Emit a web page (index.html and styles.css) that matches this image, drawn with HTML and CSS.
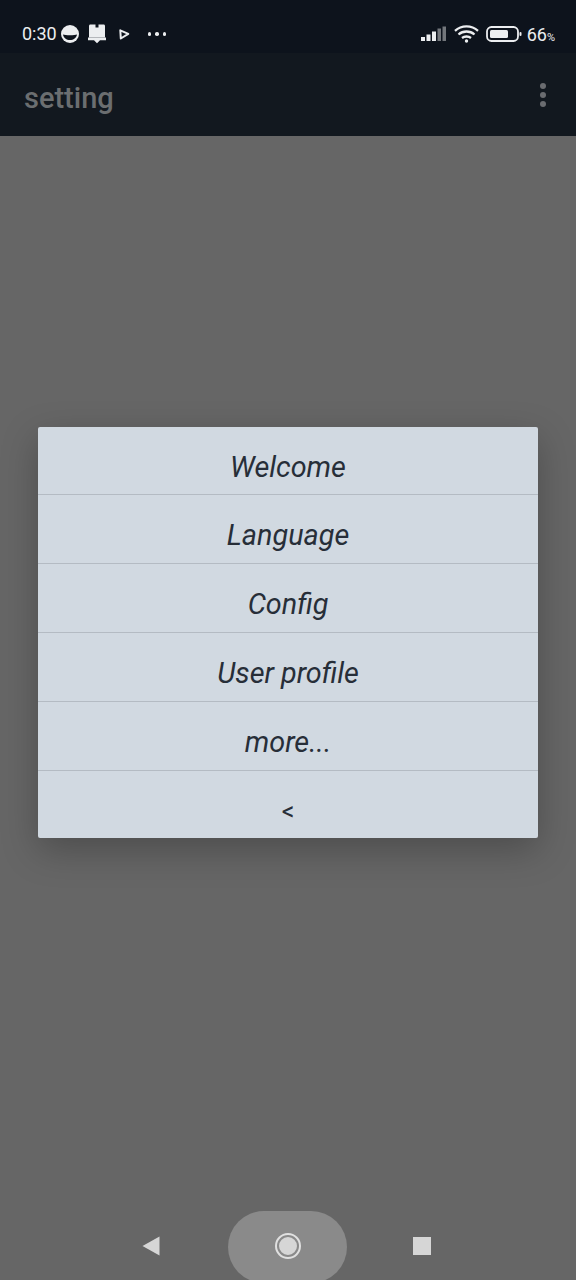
FILE: index.html
```html
<!DOCTYPE html>
<html lang="en">
<head>
  <meta charset="UTF-8" />
  <meta name="viewport" content="width=device-width, initial-scale=1.0" />
  <title>setting</title>
  <link rel="stylesheet" href="styles.css">
</head>
<body>
  <div class="page">
    <div class="status-bar">
      <div class="status-left">
        <span class="clock">0:30</span>
        <svg class="ic-face" width="18" height="18" viewBox="0 0 18 18"><circle cx="9" cy="9" r="9" fill="#eceef0"/><path d="M2 9.500c2 1 12 1 14 0c-.5 3.500-3.500 5.500-7 5.500s-6.500-2-7-5.500z" fill="#0d131c"/></svg>
        <svg class="ic-bell" width="18" height="20" viewBox="0 0 18 20"><path d="M1 2c0-.8.5-1.500 1.500-1.500h5v3h3v-3h5c1 0 1.500.7 1.500 1.500v11.500H1z" fill="#eceef0"/><path d="M0 13.500h18v2.800H0zM6 16.300h6l-3 2.900z" fill="#eceef0"/></svg>
        <svg class="ic-play" width="11" height="11" viewBox="0 0 11 11"><path d="M1.300 1.300L9.300 4.800 1.800 9.500z" fill="none" stroke="#eceef0" stroke-width="2" stroke-linejoin="round"/></svg>
        <span class="dots"><i></i><i></i><i></i></span>
      </div>
      <div class="status-right">
        <svg width="26" height="16" viewBox="0 0 26 16"><rect x="0" y="11" width="4" height="4" fill="#eceef0"/><rect x="5.500" y="8.500" width="4" height="6.500" fill="#eceef0"/><rect x="11" y="5.500" width="4" height="9.500" fill="#eceef0"/><rect x="16.500" y="2.500" width="3.500" height="12.500" fill="#73777c"/><rect x="21.500" y="0.500" width="3.500" height="14.500" fill="#73777c"/></svg>
        <svg width="25" height="18" viewBox="0 0 25 18" fill="none" stroke="#eceef0" stroke-width="2.300"><path d="M1 5.800c6.500-6 16.500-6 23 0"/><path d="M4.500 9.500c4.500-4 11.500-4 16 0"/><path d="M8 13c2.500-2 6.500-2 9 0"/><circle cx="12.500" cy="16" r="1.700" fill="#eceef0" stroke="none"/></svg>
        <svg width="36" height="18" viewBox="0 0 36 18"><rect x="1" y="2" width="31" height="14" rx="4.500" fill="none" stroke="#eceef0" stroke-width="1.800"/><rect x="4" y="5" width="18" height="8" rx="1.500" fill="#eceef0"/><rect x="33.500" y="7" width="2" height="4" rx="1" fill="#eceef0"/></svg>
        <span class="battery">66<small>%</small></span>
      </div>
    </div>

    <header class="app-bar">
      <h1>setting</h1>
      <span class="overflow"><i></i><i></i><i></i></span>
    </header>

    <main class="content">
      <div class="dialog">
        <button class="item first">Welcome</button>
        <button class="item">Language</button>
        <button class="item">Config</button>
        <button class="item">User profile</button>
        <button class="item">more...</button>
        <button class="item back">&lt;</button>
      </div>
    </main>

    <nav class="nav-bar">
      <svg class="nav-back" width="18" height="20" viewBox="0 0 18 20"><path d="M0.500 10L17.500 0.500v19z" fill="#d6d6d6"/></svg>
      <div class="nav-home">
        <span class="home-ring"></span>
      </div>
      <span class="nav-square"></span>
    </nav>
  </div>
</body>
</html>
```

FILE: styles.css
```css
* {
  box-sizing: border-box;
  margin: 0;
  padding: 0;
}

body {
  background-color: #666666;
  font-family: Roboto, Arial, sans-serif;
}

.page {
  width: 576px;
  height: 1280px;
  display: flex;
  flex-direction: column;
  overflow: hidden;
}

.status-bar {
  height: 53px;
  flex: none;
  background-color: #0d131c;
  color: #eceef0;
  display: flex;
  align-items: center;
  justify-content: space-between;
  padding: 15px 21px 0 22px;
}

.status-left,
.status-right {
  display: flex;
  align-items: center;
}

.clock {
  font-size: 18px;
  line-height: 20px;
}

.ic-face {
  margin-left: 4px;
}

.ic-bell {
  margin-left: 9px;
}

.ic-play {
  margin-left: 13px;
}

.dots {
  display: flex;
  gap: 4px;
  margin-left: 18px;
}

.dots i {
  width: 3.5px;
  height: 3.5px;
  border-radius: 50%;
  background-color: #eceef0;
}

.status-right svg {
  margin-right: 7px;
}

.battery {
  font-size: 18px;
  margin-left: -2px;
}

.battery small {
  font-size: 11px;
}

.app-bar {
  height: 83px;
  flex: none;
  background-color: #12181f;
  display: flex;
  align-items: center;
  justify-content: space-between;
  padding: 6px 30px 0 24px;
}

.app-bar h1 {
  font-size: 29px;
  font-weight: 500;
  color: #6b6e70;
}

.overflow {
  display: flex;
  flex-direction: column;
  gap: 3px;
  margin-top: -6px;
}

.overflow i {
  width: 6px;
  height: 6px;
  border-radius: 50%;
  background-color: #6a6c70;
}

.content {
  flex: 1;
  display: flex;
  flex-direction: column;
  align-items: center;
  padding-top: 291px;
}

.dialog {
  width: 500px;
  background-color: #d1d9e1;
  border-radius: 2px;
  box-shadow: 0 12px 36px rgba(0, 0, 0, 0.25);
  display: flex;
  flex-direction: column;
}

.item {
  height: 69px;
  padding-top: 12px;
  border: none;
  border-bottom: 1px solid #b4bbc3;
  background: transparent;
  font-family: Roboto, Arial, sans-serif;
  font-size: 28.8px;
  font-style: italic;
  color: #272e38;
}

.item.first {
  height: 68px;
}

.item.back {
  height: 67px;
  padding-top: 13px;
  border-bottom: none;
  font-style: normal;
  font-size: 25px;
}

.nav-bar {
  height: 69px;
  flex: none;
  display: flex;
  align-items: center;
  justify-content: center;
  padding-right: 4px;
}

.nav-back {
  margin-right: 68px;
  margin-top: 1px;
}

.nav-home {
  width: 119px;
  height: 72px;
  margin-bottom: -3px;
  border-radius: 36px;
  background-color: #8a8a8a;
  display: flex;
  align-items: center;
  justify-content: center;
}

.home-ring {
  width: 18px;
  height: 18px;
  border-radius: 50%;
  background-color: #d6d6d6;
  border: 2px solid #8a8a8a;
  outline: 2px solid #e0e0e0;
  margin: 0 0 3px 2px;
  box-sizing: content-box;
}

.nav-square {
  width: 18px;
  height: 18px;
  margin-left: 66px;
  background-color: #d6d6d6;
}
```
